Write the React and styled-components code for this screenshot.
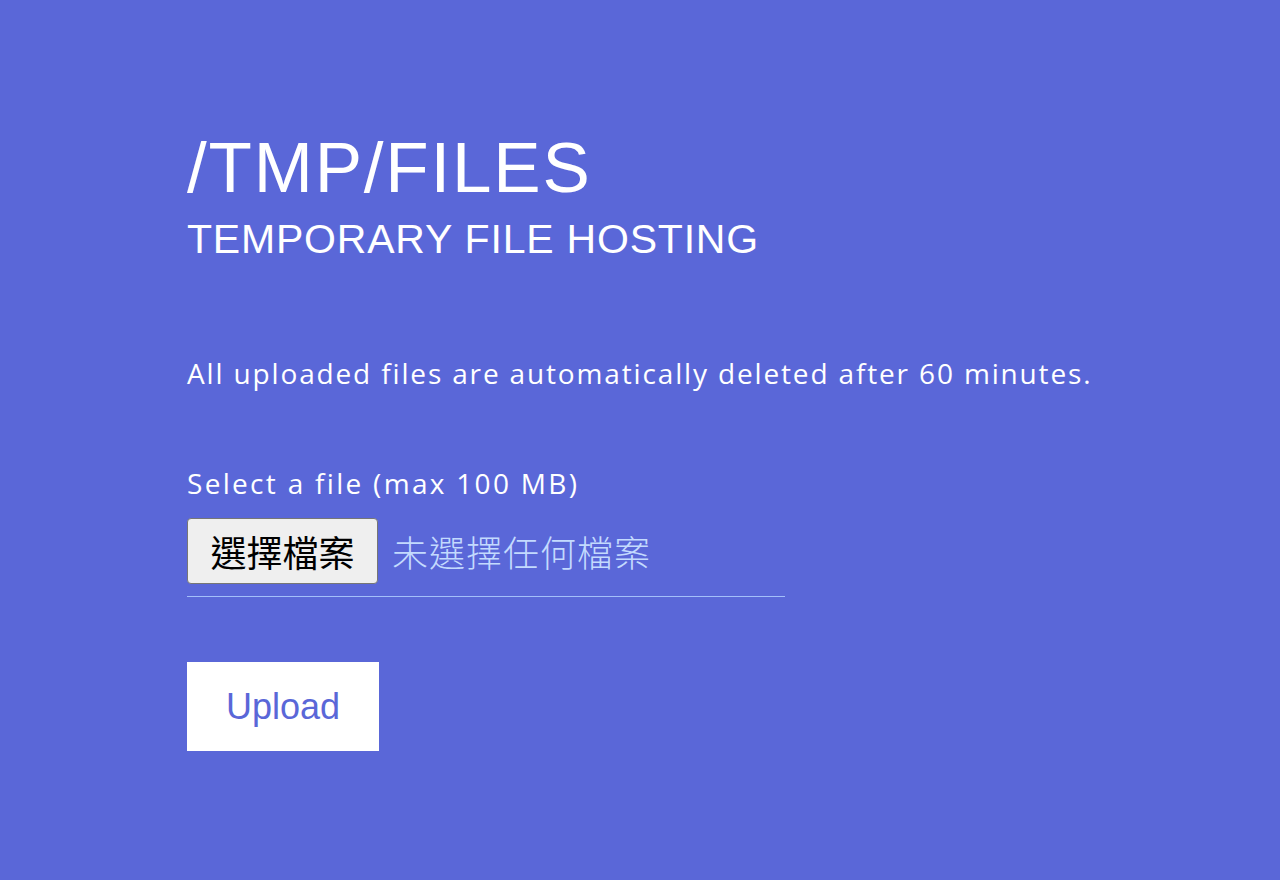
import React, { useState } from 'react';
import styled, { createGlobalStyle } from 'styled-components';

const GlobalStyle = createGlobalStyle`
  html, body {
    margin: 0;
    padding: 0;
    background: #5a67d8;
  }
  body {
    font-family: "Liberation Sans", "Noto Sans CJK TC", sans-serif;
    color: #ffffff;
  }
`;

const App = () => {
  const [fileName, setFileName] = useState('');
  return (
    <>
      <GlobalStyle />
      <Page>
        <Header>
          <Title>/TMP/FILES</Title>
          <Subtitle>TEMPORARY FILE HOSTING</Subtitle>
        </Header>
        <Notice>All uploaded files are automatically deleted after 60 minutes.</Notice>
        <Form onSubmit={(e) => e.preventDefault()}>
          <Label htmlFor="file">Select a file (max 100 MB)</Label>
          <FileRow>
            <PickButton>
              選擇檔案
              <HiddenInput
                id="file"
                type="file"
                onChange={(e) => setFileName(e.target.files[0]?.name || '')}
              />
            </PickButton>
            <FileName>{fileName || '未選擇任何檔案'}</FileName>
          </FileRow>
          <UploadButton type="submit">Upload</UploadButton>
        </Form>
      </Page>
    </>
  );
};

export default App;

const Page = styled.main`
  min-height: 880px;
  box-sizing: border-box;
  padding: 128px 0 0 187px;
`;

const Header = styled.header`
  display: flex;
  flex-direction: column;
`;

const Title = styled.h1`
  margin: 0;
  font-size: 71px;
  font-weight: normal;
  line-height: 80px;
  letter-spacing: 1.8px;
`;

const Subtitle = styled.h2`
  margin: 8px 0 0;
  font-size: 41px;
  font-weight: normal;
  line-height: 46px;
  letter-spacing: 0.8px;
`;

const Notice = styled.p`
  margin: 91px 0 0;
  font-family: "Open Sans", sans-serif;
  font-size: 28px;
  line-height: 40px;
  letter-spacing: 1.85px;
`;

const Form = styled.form`
  display: flex;
  flex-direction: column;
  align-items: flex-start;
  margin-top: 70px;
`;

const Label = styled.label`
  font-family: "Open Sans", sans-serif;
  font-size: 28px;
  line-height: 40px;
  letter-spacing: 2.3px;
`;

const FileRow = styled.div`
  display: flex;
  align-items: center;
  gap: 14px;
  width: 598px;
  margin-top: 15px;
  padding-bottom: 12px;
  border-bottom: 1px solid #a3bffa;
`;

const PickButton = styled.label`
  position: relative;
  box-sizing: border-box;
  height: 66px;
  width: 191px;
  display: flex;
  align-items: center;
  justify-content: center;
  background: #efefef;
  border: 1px solid #767676;
  border-radius: 4px;
  color: #000;
  font-family: "Noto Sans CJK TC", sans-serif;
  font-size: 36px;
  cursor: pointer;
`;

const HiddenInput = styled.input`
  position: absolute;
  inset: 0;
  opacity: 0;
  width: 100%;
  cursor: pointer;
`;

const FileName = styled.span`
  font-family: "Noto Sans CJK TC", sans-serif;
  font-weight: 300;
  font-size: 36px;
  letter-spacing: 1px;
  color: #c3dafe;
`;

const UploadButton = styled.button`
  margin-top: 65px;
  width: 192px;
  height: 89px;
  background: #ffffff;
  border: none;
  color: #5a67d8;
  font-family: "Liberation Sans", sans-serif;
  font-size: 36px;
  font-weight: normal;
  cursor: pointer;
`;
